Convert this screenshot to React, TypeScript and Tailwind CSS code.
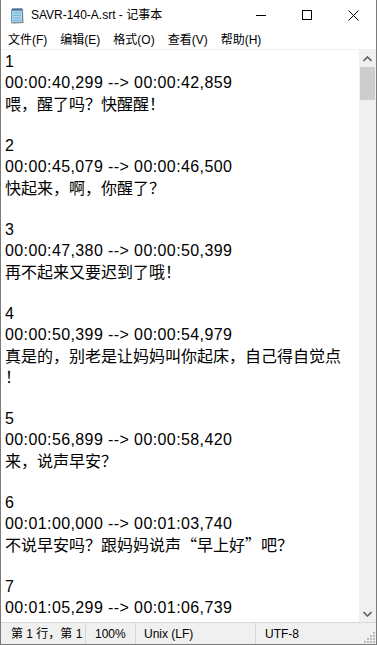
const LATIN = "font-['Liberation_Sans','Noto_Sans_CJK_SC',sans-serif]";

const lines: string[] = [
  "1",
  "00:00:40,299 --> 00:00:42,859",
  "喂，醒了吗？快醒醒！",
  "",
  "2",
  "00:00:45,079 --> 00:00:46,500",
  "快起来，啊，你醒了？",
  "",
  "3",
  "00:00:47,380 --> 00:00:50,399",
  "再不起来又要迟到了哦！",
  "",
  "4",
  "00:00:50,399 --> 00:00:54,979",
  "真是的，别老是让妈妈叫你起床，自己得自觉点",
  "！",
  "",
  "5",
  "00:00:56,899 --> 00:00:58,420",
  "来，说声早安？",
  "",
  "6",
  "00:01:00,000 --> 00:01:03,740",
  "不说早安吗？跟妈妈说声“早上好”吧？",
  "",
  "7",
  "00:01:05,299 --> 00:01:06,739",
];

const menus = ["文件(F)", "编辑(E)", "格式(O)", "查看(V)", "帮助(H)"];

function NotepadIcon() {
  return (
    <svg width="17" height="17" viewBox="0 0 17 17">
      <path d="M3 3 L14 2.5 L14.5 16 L3.5 16.5 Z" fill="#c08a3a" />
      <path d="M2.5 2.5 L13.5 2 L13.5 15.5 L2.5 15.8 Z" fill="#a8d4ee" stroke="#4f86b5" strokeWidth="0.8" />
      <path d="M4 6 H12 M4 8.5 H12 M4 11 H12 M4 13.5 H12" stroke="#79acd3" strokeWidth="0.8" />
      {[3.5, 5.5, 7.5, 9.5, 11.5].map((x) => (
        <rect key={x} x={x} y="1" width="1" height="3" fill="#2f4f6f" />
      ))}
    </svg>
  );
}

function Chevron({ down }: { down?: boolean }) {
  return (
    <svg width="9" height="6" viewBox="0 0 9 6">
      <path
        d={down ? "M0.5 1 L4.5 5 L8.5 1" : "M0.5 5 L4.5 1 L8.5 5"}
        fill="none"
        stroke="#606060"
        strokeWidth="1.6"
      />
    </svg>
  );
}

function Grip() {
  const dots = [
    [9, 1], [9, 4], [6, 4], [9, 7], [6, 7], [3, 7], [9, 10], [6, 10], [3, 10], [0, 10],
  ];
  return (
    <svg width="11" height="12" viewBox="0 0 11 12">
      {dots.map(([x, y]) => (
        <rect key={`${x}-${y}`} x={x} y={y} width="2" height="2" fill="#bcbcbc" />
      ))}
    </svg>
  );
}

export default function App() {
  return (
    <div
      lang="zh-CN"
      className={`w-[377px] h-[645px] flex flex-col bg-white border-l border-r border-b border-[#7a7a7a] text-black ${LATIN}`}
    >
      {/* title bar */}
      <div className="h-[30px] flex items-center bg-white">
        <div className="pl-[8px] pr-[5px] flex items-center">
          <NotepadIcon />
        </div>
        <span className="text-[12px] flex-1 whitespace-nowrap">SAVR-140-A.srt - 记事本</span>
        <div className="flex h-full">
          <div className="w-[46px] h-full flex items-center justify-center">
            <div className="w-[10px] h-px bg-black" />
          </div>
          <div className="w-[46px] h-full flex items-center justify-center">
            <div className="w-[10px] h-[10px] border border-black" />
          </div>
          <div className="w-[46px] h-full flex items-center justify-center">
            <svg width="11" height="11" viewBox="0 0 11 11">
              <path d="M0.5 0.5 L10.5 10.5 M10.5 0.5 L0.5 10.5" stroke="#000" strokeWidth="1" />
            </svg>
          </div>
        </div>
      </div>

      {/* menu bar */}
      <div className="h-[20px] flex items-center pl-[1px] text-[12px] border-b border-[#f0f0f0]">
        {menus.map((m) => (
          <span key={m} className="px-[6px] mr-[1px] whitespace-nowrap">
            {m}
          </span>
        ))}
      </div>

      {/* edit area */}
      <div className="flex-1 flex min-h-0">
        <div className="flex-1 overflow-hidden pl-[4px] pt-[1px] leading-[21px]">
          {lines.map((l, i) => {
            const latin = /^[0-9:, ->]*$/.test(l);
            return (
              <div
                key={i}
                className={
                  latin
                    ? "h-[21px] whitespace-nowrap text-[16px] tracking-[0.4px]"
                    : "h-[21px] whitespace-nowrap text-[16px] font-['Noto_Sans_CJK_SC',sans-serif]"
                }
              >
                {l || "\u00a0"}
              </div>
            );
          })}
        </div>
        <div className="w-[17px] bg-[#f0f0f0] flex flex-col">
          <div className="h-[17px] flex items-center justify-center">
            <Chevron />
          </div>
          <div className="h-[33px] mx-px bg-[#cdcdcd]" />
          <div className="flex-1" />
          <div className="h-[17px] flex items-center justify-center">
            <Chevron down />
          </div>
        </div>
      </div>

      {/* status bar */}
      <div className="h-[22px] flex items-center bg-[#f0f0f0] border-t border-[#d7d7d7] text-[12px]">
        <div className="w-[85px] h-full flex items-center pl-[10px] overflow-hidden whitespace-nowrap border-r border-[#d7d7d7]">
          第 1 行，第 1 列
        </div>
        <div className="w-[50px] h-full flex items-center pl-[9px] border-r border-[#d7d7d7]">100%</div>
        <div className="w-[120px] h-full flex items-center pl-[8px] border-r border-[#d7d7d7]">Unix (LF)</div>
        <div className="flex-1 h-full flex items-center pl-[9px]">UTF-8</div>
        <div className="self-end pr-[1px] pb-[1px]">
          <Grip />
        </div>
      </div>
    </div>
  );
}
